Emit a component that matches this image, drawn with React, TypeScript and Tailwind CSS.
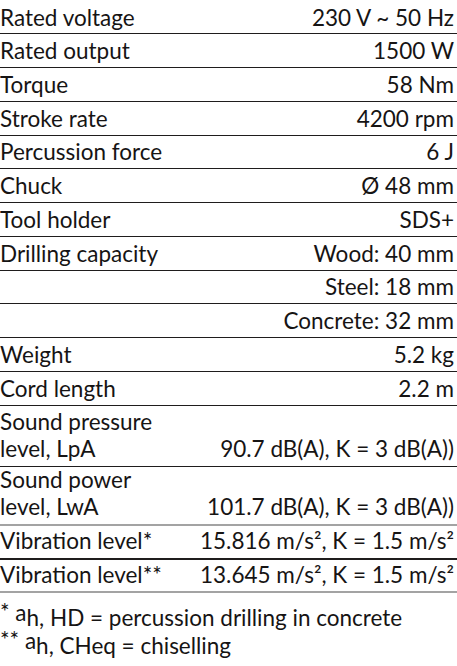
import React from "react";

type RowProps = { label: React.ReactNode; value: React.ReactNode; cls: string };

function Row({ label, value, cls }: RowProps) {
  return (
    <div className={`flex items-end justify-between ${cls}`}>
      <div className="pl-0">{label}</div>
      <div className="pr-[3px] text-right whitespace-nowrap">{value}</div>
    </div>
  );
}

export default function App() {
  return (
    <div
      className="w-[457px] h-[666px] bg-white text-[#161414] text-[22.5px] leading-[27px] overflow-hidden"
      style={{ fontFamily: "Lato, 'Open Sans', sans-serif" }}
    >
      <Row label="Rated voltage" value="230 V ~ 50 Hz" cls="h-[34px] pb-[2px] border-b border-[#1f1d1d]" />
      <Row label="Rated output" value="1500 W" cls="h-[34px] pb-[3px] border-b border-[#1f1d1d]" />
      <Row label="Torque" value="58 Nm" cls="h-[34px] pb-[3px] border-b border-[#1f1d1d]" />
      <Row label="Stroke rate" value="4200 rpm" cls="h-[34px] pb-[3px] border-b border-[#1f1d1d]" />
      <Row label="Percussion force" value="6 J" cls="h-[33px] pb-[3px] border-b border-[#1f1d1d]" />
      <Row label="Chuck" value="Ø 48 mm" cls="h-[34px] pb-[3px] border-b border-[#1f1d1d]" />
      <Row label="Tool holder" value="SDS+" cls="h-[34px] pb-[3px] border-b border-[#1f1d1d]" />
      <Row label="Drilling capacity" value="Wood: 40 mm" cls="h-[34px] pb-[3px] border-b border-[#1f1d1d]" />
      <Row label="" value="Steel: 18 mm" cls="h-[33px] pb-[3px] border-b border-[#1f1d1d]" />
      <Row label="" value="Concrete: 32 mm" cls="h-[34px] pb-[3px] border-b border-[#1f1d1d]" />
      <Row label="Weight" value="5.2 kg" cls="h-[34px] pb-[3px] border-b border-[#1f1d1d]" />
      <Row label="Cord length" value="2.2 m" cls="h-[34px] pb-[3px] border-b border-[#1f1d1d]" />
      <Row
        label={
          <>
            Sound pressure
            <br />
            level, LpA
          </>
        }
        value="90.7 dB(A), K = 3 dB(A))"
        cls="h-[61px] pb-[4px] border-b border-[#1f1d1d]"
      />
      <Row
        label={
          <>
            Sound power
            <br />
            level, LwA
          </>
        }
        value="101.7 dB(A), K = 3 dB(A))"
        cls="h-[59px] pb-[4px] border-b-2 border-[#a3a3a3]"
      />
      <Row label="Vibration level*" value="15.816 m/s², K = 1.5 m/s²" cls="h-[34px] pb-[4px] border-b-2 border-[#1f1d1d]" />
      <Row label="Vibration level**" value="13.645 m/s², K = 1.5 m/s²" cls="h-[33px] pb-[3px] border-b-2 border-[#a3a3a3]" />
      <div className="mt-[11px] leading-[28px]">
        <div className="whitespace-nowrap">
          <span className="relative top-[-6px]">*</span>{" "}
          <span className="relative top-[-5px]">a</span>h, HD = percussion drilling in concrete
        </div>
        <div className="whitespace-nowrap">
          <span className="relative top-[-6px]">**</span>{" "}
          <span className="relative top-[-5px]">a</span>h, CHeq = chiselling
        </div>
      </div>
    </div>
  );
}
